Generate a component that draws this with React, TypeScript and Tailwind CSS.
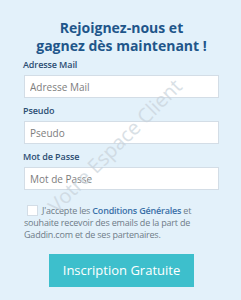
import { useState } from "react";

const fields = [
  { label: "Adresse Mail", type: "email" },
  { label: "Pseudo", type: "text" },
  { label: "Mot de Passe", type: "password" },
];

const App = () => {
  const [accepted, setAccepted] = useState(false);

  return (
    <div
      className="relative w-[241px] h-[300px] overflow-hidden bg-[#e3f1fa]"
      style={{ fontFamily: '"Open Sans", "Noto Sans", sans-serif' }}
    >
      <div className="relative flex flex-col pl-6 pr-[22px] pt-[19px]">
        <h1 className="text-center text-[14px] leading-[18px] font-bold text-[#1f568a]">
          Rejoignez-nous et
          <br />
          gagnez dès maintenant !
        </h1>

        <form className="mt-[4px] flex flex-col" onSubmit={(e) => e.preventDefault()}>
          {fields.map((f) => (
            <div key={f.label} className="mb-[7px] flex flex-col">
              <label className="-ml-px text-[9px] leading-[12px] font-semibold tracking-[-0.1px] text-[#2b4d72]">
                {f.label}
              </label>
              <input
                type={f.type}
                placeholder={f.label}
                className="mt-[4px] h-[23px] w-full border border-[#d3dde6] bg-white px-[5px] text-[10px] text-[#555] placeholder:text-[#7d7d7d] outline-none"
              />
            </div>
          ))}

          <div className="mt-[8px] pr-[10px] text-[9px] leading-[12px] tracking-[-0.2px] text-[#6f7c88]">
            <label className="inline">
              <input
                type="checkbox"
                checked={accepted}
                onChange={(e) => setAccepted(e.target.checked)}
                className="mr-[4px] ml-[3px] inline-block h-[11px] w-[11px] appearance-none border border-[#d3dde6] bg-white align-[-2px]"
              />
              J'accepte les{" "}
            </label>
            <span className="font-semibold text-[#3a70a8]">Conditions Générales</span> et
            souhaite recevoir des emails de la part de Gaddin.com et de ses partenaires.
          </div>

          <button
            type="submit"
            className="mx-auto mt-[13px] h-[33px] w-[145px] bg-[#3dbfcc] text-[13px] text-white"
          >
            Inscription Gratuite
          </button>
        </form>
      </div>

      {/* Watermark over the form */}
      <div className="pointer-events-none absolute left-[10px] top-[134px] w-[210px] text-center text-[20px] leading-[24px] text-[#c9d3db] opacity-70 -rotate-45 select-none">
        Votre Espace Client
      </div>
    </div>
  );
};

export default App;
